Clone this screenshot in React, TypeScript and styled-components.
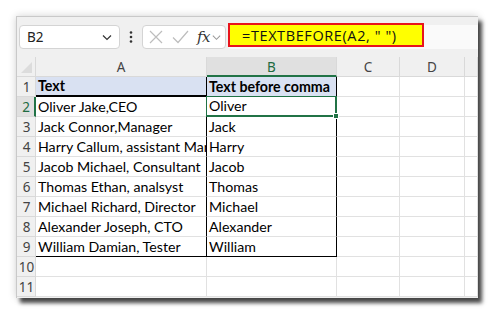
import React from "react";
import styled, { createGlobalStyle } from "styled-components";

const Global = createGlobalStyle`
  html, body { margin: 0; padding: 0; background: #ffffff; }
  body { font-family: "Noto Sans", sans-serif; }
  * { box-sizing: border-box; }
`;

const Page = styled.div`
  width: 495px;
  height: 315px;
  padding: 16px 0 0 16px;
`;

const Window = styled.div`
  width: 462px;
  height: 282px;
  background: #f0f0f0;
  border: 1px solid #c9c9c9;
  border-right: none;
  border-bottom: none;
  box-shadow: 4px 5px 4px rgba(0, 0, 0, 0.7), 0 0 8px rgba(0, 0, 0, 0.18);
  display: flex;
  flex-direction: column;
  overflow: hidden;
`;

const Toolbar = styled.div`
  height: 40px;
  display: flex;
  align-items: flex-start;
  padding: 8px 0 0 2px;
  flex-shrink: 0;
`;

const Field = styled.div<{ $w: number }>`
  width: ${(p) => p.$w}px;
  height: 24px;
  background: #ffffff;
  border: 1px solid #d4d4d4;
  border-radius: 4px;
  display: flex;
  align-items: center;
`;

const NameText = styled.span`
  flex: 1;
  padding-left: 7px;
  font-family: "Noto Sans", sans-serif;
  font-size: 13.5px;
  color: #222;
`;

const Dots = styled.div`
  width: 22px;
  height: 24px;
  display: flex;
  align-items: center;
  justify-content: center;
`;

const FxField = styled(Field)`
  justify-content: flex-start;
  padding-left: 4px;
  margin-right: 2px;
`;

const Fx = styled.span`
  font-family: "DejaVu Serif", "Liberation Serif", serif;
  font-style: italic;
  font-size: 15px;
  color: #333;
  margin-left: 6px;
  letter-spacing: -0.5px;
`;

const FormulaField = styled.div`
  flex: 1;
  height: 24px;
  background: #fafafa;
  border-radius: 4px 0 0 4px;
  position: relative;
`;

const Highlight = styled.div`
  position: absolute;
  left: 0;
  top: -2px;
  width: 196px;
  height: 24px;
  background: #ffff00;
  border: 2px solid #e8141b;
  display: flex;
  align-items: center;
  padding-left: 12px;
  font-family: "Open Sans", sans-serif;
  font-size: 14.5px;
  color: #111;
  white-space: pre;
  letter-spacing: 0.6px;
`;

const Grid = styled.div`
  display: grid;
  grid-template-columns: 19px 171px 130px 63px 65px 1fr;
  grid-auto-rows: 20px;
  background: #ffffff;
  position: relative;
`;

const Corner = styled.div`
  background: #f0f0f0;
  border-right: 1px solid #d9d9d9;
  border-bottom: 1px solid #d9d9d9;
  position: relative;
  &::after {
    content: "";
    position: absolute;
    right: 3px;
    bottom: 3px;
    border-style: solid;
    border-width: 0 0 11px 11px;
    border-color: transparent transparent #dcdcdc transparent;
  }
`;

const ColHead = styled.div<{ $sel?: boolean }>`
  background: ${(p) => (p.$sel ? "#e0e0e0" : "#f0f0f0")};
  border-right: 1px solid #d9d9d9;
  border-bottom: ${(p) => (p.$sel ? "2px solid #217346" : "1px solid #d9d9d9")};
  color: ${(p) => (p.$sel ? "#1e6b41" : "#444")};
  font-family: "Noto Sans", sans-serif;
  font-size: 13.5px;
  display: flex;
  align-items: center;
  justify-content: center;
  padding-top: ${(p) => (p.$sel ? "2px" : "1px")};
`;

const RowHead = styled.div<{ $sel?: boolean }>`
  background: ${(p) => (p.$sel ? "#e0e0e0" : "#f0f0f0")};
  border-right: ${(p) => (p.$sel ? "2px solid #217346" : "1px solid #d9d9d9")};
  border-bottom: 1px solid #d9d9d9;
  color: ${(p) => (p.$sel ? "#1e6b41" : "#444")};
  font-family: "Noto Sans", sans-serif;
  font-size: 13.5px;
  display: flex;
  align-items: center;
  justify-content: center;
  padding-left: 1px;
  padding-top: 1px;
`;

type CellProps = {
  $bold?: boolean;
  $head?: boolean;
  $clip?: boolean;
  $bt?: string;
  $bb?: string;
  $bl?: string;
  $br?: string;
};

const Cell = styled.div<CellProps>`
  background: ${(p) => (p.$head ? "#d9e1f2" : "#ffffff")};
  border-right: ${(p) => p.$br || "1px solid #e1e1e1"};
  border-bottom: ${(p) => p.$bb || "1px solid #e1e1e1"};
  border-left: ${(p) => p.$bl || "none"};
  border-top: ${(p) => p.$bt || "none"};
  font-family: "Lato", "Open Sans", sans-serif;
  font-size: 14.2px;
  font-weight: ${(p) => (p.$bold ? 700 : 400)};
  color: #000;
  padding: 0 0 2px 2px;
  display: flex;
  align-items: flex-end;
  white-space: nowrap;
  overflow: ${(p) => (p.$clip ? "hidden" : "visible")};
  position: relative;
  line-height: 1;
`;

const Handle = styled.div`
  position: absolute;
  right: -4px;
  bottom: -4px;
  width: 6px;
  height: 6px;
  background: #217346;
  border: 1px solid #fff;
  z-index: 2;
`;

const Chevron = () => (
  <svg width="12" height="12" viewBox="0 0 12 12" style={{ marginRight: 6 }}>
    <path d="M2 4.5 L6 8.5 L10 4.5" fill="none" stroke="#333" strokeWidth="1.2" />
  </svg>
);

const data: [string, string][] = [
  ["Oliver Jake,CEO", "Oliver"],
  ["Jack Connor,Manager", "Jack"],
  ["Harry Callum, assistant Manager", "Harry"],
  ["Jacob Michael, Consultant", "Jacob"],
  ["Thomas Ethan, analsyst", "Thomas"],
  ["Michael Richard, Director", "Michael"],
  ["Alexander Joseph, CTO", "Alexander"],
  ["William Damian, Tester", "William"],
];

const BLACK = "1px solid #000";
const GREEN = "2px solid #217346";

export default function App() {
  return (
    <>
      <Global />
      <Page>
        <Window>
          <Toolbar>
            <Field $w={101}>
              <NameText>B2</NameText>
              <Chevron />
            </Field>
            <Dots>
              <svg width="4" height="14" viewBox="0 0 4 14">
                <circle cx="2" cy="2.5" r="1.3" fill="#333" />
                <circle cx="2" cy="7" r="1.3" fill="#333" />
                <circle cx="2" cy="11.5" r="1.3" fill="#333" />
              </svg>
            </Dots>
            <FxField $w={84}>
              <svg width="18" height="18" viewBox="0 0 18 18">
                <path d="M3 3 L15 15 M15 3 L3 15" stroke="#bdbdbd" strokeWidth="1.2" fill="none" />
              </svg>
              <svg width="22" height="18" viewBox="0 0 22 18" style={{ marginLeft: 4 }}>
                <path d="M4 9.5 L9 14.5 L19 3" stroke="#bdbdbd" strokeWidth="1.2" fill="none" />
              </svg>
              <Fx>fx</Fx>
              <svg width="11" height="12" viewBox="0 0 12 12" style={{ marginLeft: 1 }}>
                <path d="M2 4.5 L6 8.5 L10 4.5" fill="none" stroke="#999" strokeWidth="1.1" />
              </svg>
            </FxField>
            <FormulaField>
              <Highlight>{'=TEXTBEFORE(A2, " ")'}</Highlight>
            </FormulaField>
          </Toolbar>
          <Grid>
            <Corner />
            <ColHead>A</ColHead>
            <ColHead $sel>B</ColHead>
            <ColHead>C</ColHead>
            <ColHead>D</ColHead>
            <ColHead />

            <RowHead>1</RowHead>
            <Cell $head $bold $clip $bb="2px solid #000" $br={BLACK}>Text</Cell>
            <Cell $head $bold $br={BLACK} $bb="1px solid #e1e1e1">Text before comma</Cell>
            <Cell />
            <Cell />
            <Cell />

            {data.map(([a, b], i) => {
              const row = i + 2;
              const last = i === data.length - 1;
              const sel = row === 2;
              return (
                <React.Fragment key={row}>
                  <RowHead $sel={sel}>{row}</RowHead>
                  <Cell $clip $br={BLACK} $bb={last ? BLACK : undefined}>{a}</Cell>
                  <Cell
                    $br={sel ? GREEN : BLACK}
                    $bb={sel ? GREEN : last ? BLACK : undefined}
                    $bl={sel ? "1px solid #217346" : undefined}
                    $bt={sel ? "1px solid #217346" : undefined}
                    style={sel ? { marginTop: -1, marginLeft: -1 } : undefined}
                  >
                    {b}
                    {sel && <Handle />}
                  </Cell>
                  <Cell />
                  <Cell />
                  <Cell />
                </React.Fragment>
              );
            })}
            {[10, 11].map((row) => (
              <React.Fragment key={row}>
                <RowHead>{row}</RowHead>
                <Cell />
                <Cell />
                <Cell />
                <Cell />
                <Cell />
              </React.Fragment>
            ))}
          </Grid>
        </Window>
      </Page>
    </>
  );
}
